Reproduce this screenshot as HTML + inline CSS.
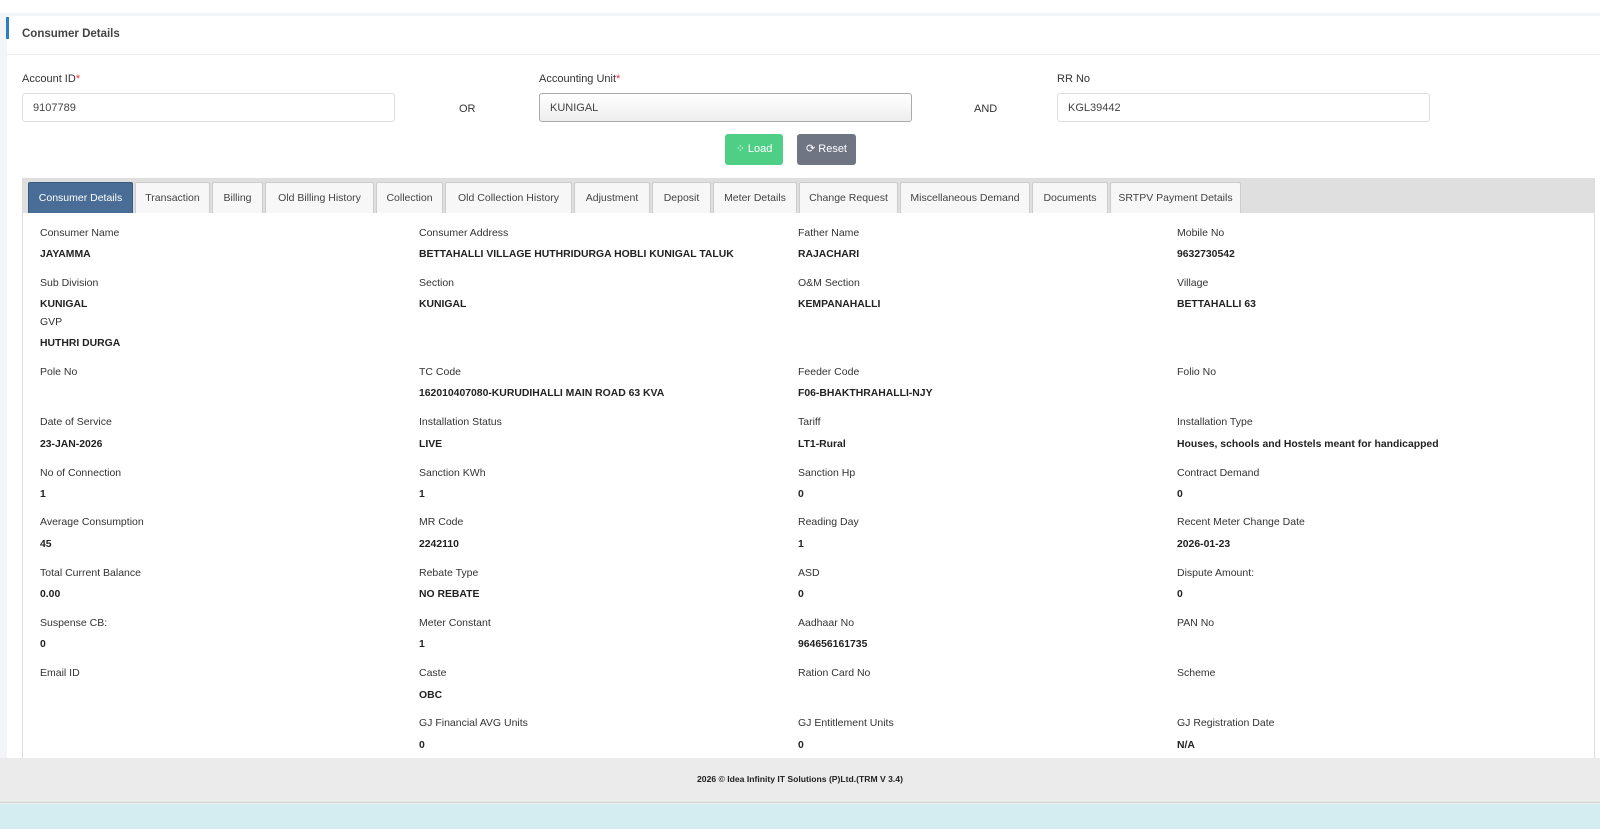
<!DOCTYPE html>
<html><head><meta charset="utf-8"><style>
*{margin:0;padding:0;box-sizing:border-box}
body{width:1600px;height:829px;overflow:hidden;background:#f3f4f7;font-family:"Liberation Sans",sans-serif;color:#333;position:relative;font-size:11px}
.abs{position:absolute}
#card{position:absolute;left:7px;top:16px;width:1593px;height:742px;background:#fff}
.inp{position:absolute;height:29px;border:1px solid #ddd;border-radius:3px;background:#fff;font-size:11px;padding:8px 10px;color:#444}
.lbl{position:absolute;font-size:11px;color:#333}
.tab{position:absolute;top:182px;height:31px;border:1px solid #ccc;border-bottom:none;background:#f7f7f7;font-size:10.5px;color:#444;text-align:center;line-height:31px;border-radius:2px 2px 0 0}
.l{position:absolute;font-size:10.5px;color:#333}
.v{position:absolute;font-size:10.4px;font-weight:bold;color:#222}
</style></head><body>
<div class="abs" style="left:0;top:0;width:1600px;height:13px;background:#fff"></div>
<div id="card"></div>
<div class="abs" style="left:6px;top:17px;width:3px;height:22px;background:#2a7fc1"></div>
<div class="abs" style="left:7px;top:54px;width:1593px;height:1px;background:#eee"></div>
<div class="abs" style="left:22px;top:28px;font-size:11.5px;font-weight:bold;color:#444">Consumer Details</div>

<div class="lbl" style="left:22px;top:73px">Account ID<span style="color:#e33">*</span></div>
<div class="inp" style="left:22px;top:93px;width:373px">9107789</div>
<div class="lbl" style="left:459px;top:103px">OR</div>
<div class="lbl" style="left:539px;top:73px">Accounting Unit<span style="color:#e33">*</span></div>
<div class="inp" style="left:539px;top:93px;width:373px;border-color:#aaa;background:linear-gradient(#fff,#eee)">KUNIGAL</div>
<div class="lbl" style="left:974px;top:103px">AND</div>
<div class="lbl" style="left:1057px;top:73px">RR No</div>
<div class="inp" style="left:1057px;top:93px;width:373px">KGL39442</div>

<div class="abs" style="left:725px;top:134px;width:58px;height:31px;background:#4fcf86;border-radius:3px;color:#fff;font-size:11px;line-height:31px;text-align:center">⁘ Load</div>
<div class="abs" style="left:797px;top:134px;width:59px;height:31px;background:#707584;border-radius:3px;color:#fff;font-size:11px;line-height:31px;text-align:center">⟳ Reset</div>

<div class="abs" style="left:22px;top:178px;width:1573px;height:580px;border:1px solid #ddd;border-bottom:none"></div>
<div class="abs" style="left:23px;top:179px;width:1571px;height:34px;background:#e0dfdf"></div>
<div class="tab" style="left:28px;width:105px;background:#4a6d97;color:#fff;border-color:#3a5a80">Consumer Details</div>
<div class="tab" style="left:135px;width:75px">Transaction</div>
<div class="tab" style="left:212px;width:51px">Billing</div>
<div class="tab" style="left:265px;width:109px">Old Billing History</div>
<div class="tab" style="left:376px;width:67px">Collection</div>
<div class="tab" style="left:445px;width:127px">Old Collection History</div>
<div class="tab" style="left:574px;width:76px">Adjustment</div>
<div class="tab" style="left:652px;width:59px">Deposit</div>
<div class="tab" style="left:713px;width:84px">Meter Details</div>
<div class="tab" style="left:799px;width:99px">Change Request</div>
<div class="tab" style="left:900px;width:130px">Miscellaneous Demand</div>
<div class="tab" style="left:1032px;width:76px">Documents</div>
<div class="tab" style="left:1110px;width:131px">SRTPV Payment Details</div>

<div class="l" style="left:40px;top:227px">Consumer Name</div><div class="v" style="left:40px;top:249px">JAYAMMA</div>
<div class="l" style="left:419px;top:227px">Consumer Address</div><div class="v" style="left:419px;top:249px">BETTAHALLI VILLAGE HUTHRIDURGA HOBLI KUNIGAL TALUK</div>
<div class="l" style="left:798px;top:227px">Father Name</div><div class="v" style="left:798px;top:249px">RAJACHARI</div>
<div class="l" style="left:1177px;top:227px">Mobile No</div><div class="v" style="left:1177px;top:249px">9632730542</div>

<div class="l" style="left:40px;top:277px">Sub Division</div><div class="v" style="left:40px;top:299px">KUNIGAL</div>
<div class="l" style="left:419px;top:277px">Section</div><div class="v" style="left:419px;top:299px">KUNIGAL</div>
<div class="l" style="left:798px;top:277px">O&amp;M Section</div><div class="v" style="left:798px;top:299px">KEMPANAHALLI</div>
<div class="l" style="left:1177px;top:277px">Village</div><div class="v" style="left:1177px;top:299px">BETTAHALLI 63</div>
<div class="l" style="left:40px;top:316px">GVP</div><div class="v" style="left:40px;top:338px">HUTHRI DURGA</div>

<div class="l" style="left:40px;top:366px">Pole No</div>
<div class="l" style="left:419px;top:366px">TC Code</div><div class="v" style="left:419px;top:388px">162010407080-KURUDIHALLI MAIN ROAD 63 KVA</div>
<div class="l" style="left:798px;top:366px">Feeder Code</div><div class="v" style="left:798px;top:388px">F06-BHAKTHRAHALLI-NJY</div>
<div class="l" style="left:1177px;top:366px">Folio No</div>

<div class="l" style="left:40px;top:416px">Date of Service</div><div class="v" style="left:40px;top:439px">23-JAN-2026</div>
<div class="l" style="left:419px;top:416px">Installation Status</div><div class="v" style="left:419px;top:439px">LIVE</div>
<div class="l" style="left:798px;top:416px">Tariff</div><div class="v" style="left:798px;top:439px">LT1-Rural</div>
<div class="l" style="left:1177px;top:416px">Installation Type</div><div class="v" style="left:1177px;top:439px">Houses, schools and Hostels meant for handicapped</div>

<div class="l" style="left:40px;top:467px">No of Connection</div><div class="v" style="left:40px;top:489px">1</div>
<div class="l" style="left:419px;top:467px">Sanction KWh</div><div class="v" style="left:419px;top:489px">1</div>
<div class="l" style="left:798px;top:467px">Sanction Hp</div><div class="v" style="left:798px;top:489px">0</div>
<div class="l" style="left:1177px;top:467px">Contract Demand</div><div class="v" style="left:1177px;top:489px">0</div>

<div class="l" style="left:40px;top:516px">Average Consumption</div><div class="v" style="left:40px;top:539px">45</div>
<div class="l" style="left:419px;top:516px">MR Code</div><div class="v" style="left:419px;top:539px">2242110</div>
<div class="l" style="left:798px;top:516px">Reading Day</div><div class="v" style="left:798px;top:539px">1</div>
<div class="l" style="left:1177px;top:516px">Recent Meter Change Date</div><div class="v" style="left:1177px;top:539px">2026-01-23</div>

<div class="l" style="left:40px;top:567px">Total Current Balance</div><div class="v" style="left:40px;top:589px">0.00</div>
<div class="l" style="left:419px;top:567px">Rebate Type</div><div class="v" style="left:419px;top:589px">NO REBATE</div>
<div class="l" style="left:798px;top:567px">ASD</div><div class="v" style="left:798px;top:589px">0</div>
<div class="l" style="left:1177px;top:567px">Dispute Amount:</div><div class="v" style="left:1177px;top:589px">0</div>

<div class="l" style="left:40px;top:617px">Suspense CB:</div><div class="v" style="left:40px;top:639px">0</div>
<div class="l" style="left:419px;top:617px">Meter Constant</div><div class="v" style="left:419px;top:639px">1</div>
<div class="l" style="left:798px;top:617px">Aadhaar No</div><div class="v" style="left:798px;top:639px">964656161735</div>
<div class="l" style="left:1177px;top:617px">PAN No</div>

<div class="l" style="left:40px;top:667px">Email ID</div>
<div class="l" style="left:419px;top:667px">Caste</div><div class="v" style="left:419px;top:690px">OBC</div>
<div class="l" style="left:798px;top:667px">Ration Card No</div>
<div class="l" style="left:1177px;top:667px">Scheme</div>

<div class="l" style="left:419px;top:717px">GJ Financial AVG Units</div><div class="v" style="left:419px;top:740px">0</div>
<div class="l" style="left:798px;top:717px">GJ Entitlement Units</div><div class="v" style="left:798px;top:740px">0</div>
<div class="l" style="left:1177px;top:717px">GJ Registration Date</div><div class="v" style="left:1177px;top:740px">N/A</div>

<div class="abs" style="left:0;top:758px;width:1600px;height:45px;background:#ebebeb;border-bottom:1px solid #d0d0d0"></div>
<div class="abs" style="left:0;top:774px;width:1600px;text-align:center;font-size:8.6px;font-weight:bold;color:#222">2026 © Idea Infinity IT Solutions (P)Ltd.(TRM V 3.4)</div>
<div class="abs" style="left:0;top:804px;width:1600px;height:25px;background:#d3edf0"></div>
</body></html>
